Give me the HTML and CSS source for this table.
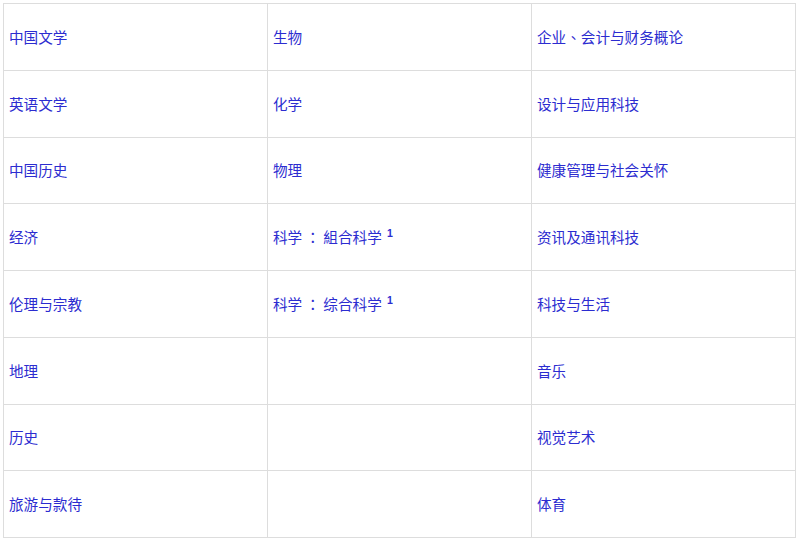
FILE: index.html
```html
<!DOCTYPE html>
<html lang="zh">
<head>
<meta charset="utf-8">
<link rel="stylesheet" href="styles.css">
</head>
<body>
<table class="grid">
<tr><td>中国文学</td><td>生物</td><td>企业<span class="punct" lang="zh-Hant-TW">、</span>会计与财务概论</td></tr>
<tr><td>英语文学</td><td>化学</td><td>设计与应用科技</td></tr>
<tr><td>中国历史</td><td>物理</td><td>健康管理与社会关怀</td></tr>
<tr><td>经济</td><td>科学 <span class="punct" lang="zh-Hant-TW">：</span> 組合科学 <sup>1</sup></td><td>资讯及通讯科技</td></tr>
<tr><td>伦理与宗教</td><td>科学 <span class="punct" lang="zh-Hant-TW">：</span> 综合科学 <sup>1</sup></td><td>科技与生活</td></tr>
<tr><td>地理</td><td></td><td>音乐</td></tr>
<tr><td>历史</td><td></td><td>视觉艺术</td></tr>
<tr><td>旅游与款待</td><td></td><td>体育</td></tr>
</table>
</body>
</html>
```
FILE: styles.css
```css
html, body {
  margin: 0;
  padding: 0;
  background: #fff;
}
body {
  padding: 3px;
  font-family: "Noto Sans CJK SC", "Liberation Sans", sans-serif;
}
.grid {
  border-collapse: collapse;
  width: 793px;
  height: 535px;
  table-layout: fixed;
}
.grid td {
  border: 1px solid #dddddd;
  width: 33.33%;
  height: 65px;
  padding: 0 5px;
  vertical-align: middle;
  color: #2c2cd0;
  font-size: 14.6px;
  line-height: 20px;
}
.punct {
  font-family: "Noto Sans CJK TC", "Noto Sans CJK SC", sans-serif;
}
.grid sup {
  font-family: "Liberation Sans", sans-serif;
  font-weight: bold;
  font-size: 10.5px;
  line-height: 0;
  vertical-align: 6px;
  margin-left: 2px;
}
```
